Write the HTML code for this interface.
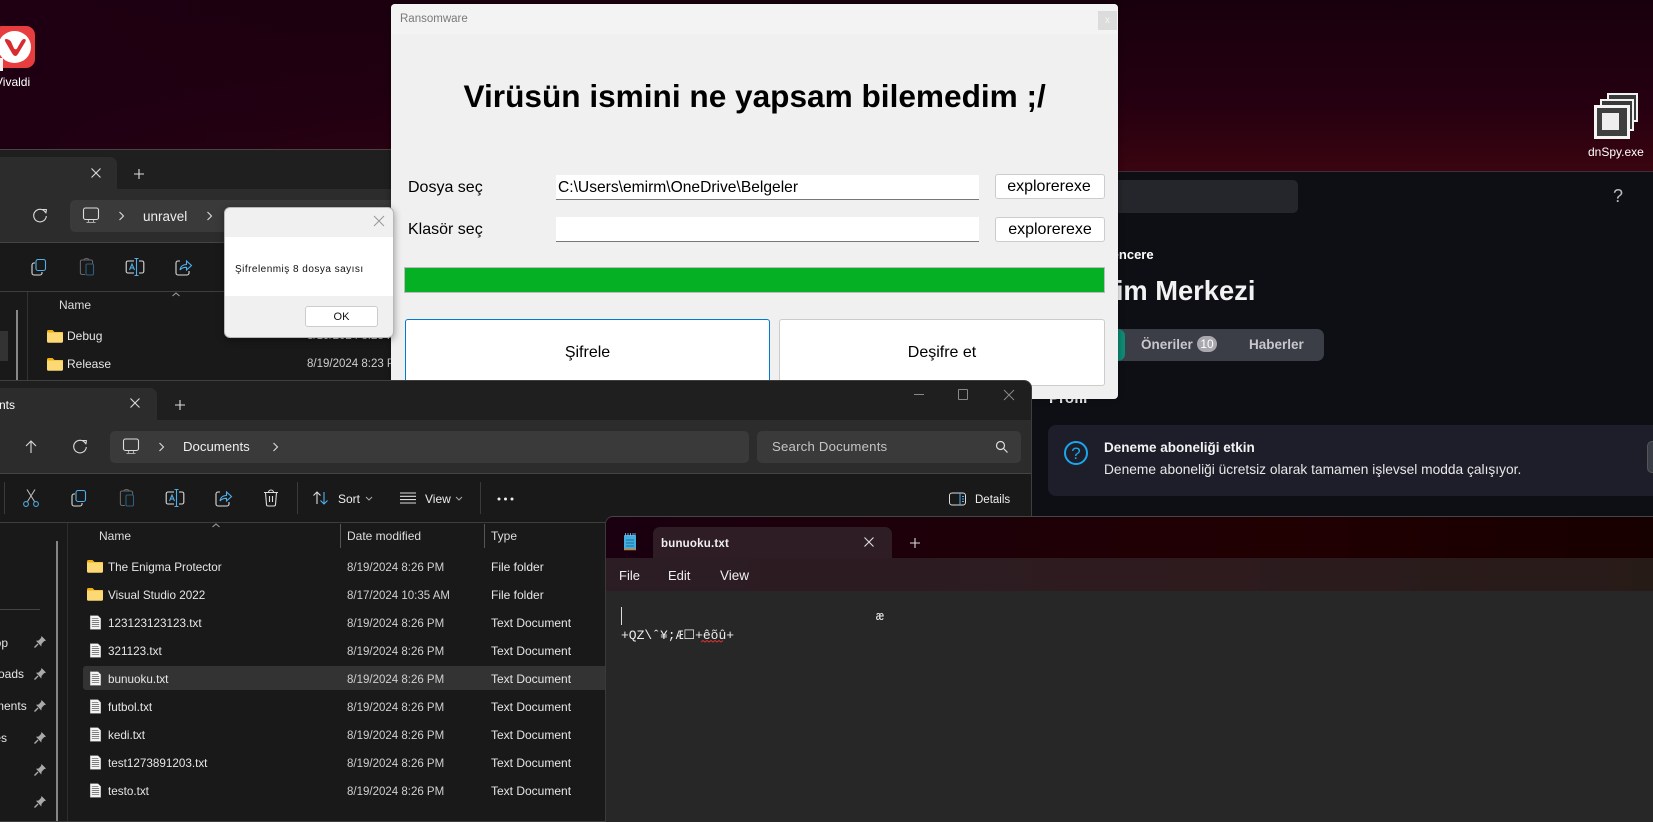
<!DOCTYPE html>
<html><head><meta charset="utf-8"><title>Ransomware</title>
<style>
html,body{margin:0;padding:0;background:#1c0012}
body{width:1653px;height:822px;overflow:hidden;position:relative;font-family:"Liberation Sans",sans-serif}
div,span,svg{position:absolute}
.t{white-space:nowrap;line-height:20px;height:20px}
.e{color:#e6e6e6;font-size:12px}
.g{color:#d0d0d0;font-size:11.5px}
.r{left:0;width:100%;height:28px}
svg.i{width:20px;height:20px;fill:none;stroke:#ddd;stroke-width:1.1}
</style></head><body>
<svg width="0" height="0" style="left:0;top:0">
<defs>
<symbol id="cut" viewBox="0 0 20 20"><path d="M6.5 13.5L14 1.5M13.5 13.5L6 1.5" stroke="#bbb" fill="none"/><circle cx="5" cy="16" r="2.4" stroke="#4aa8e0" fill="none"/><circle cx="15" cy="16" r="2.4" stroke="#4aa8e0" fill="none"/></symbol>
<symbol id="copy" viewBox="0 0 20 20"><path d="M6 6H5a2 2 0 0 0-2 2v8a2 2 0 0 0 2 2h6a2 2 0 0 0 2-2v-1" stroke="#ddd" fill="none"/><rect x="7" y="2.5" width="9.5" height="11" rx="2" stroke="#4fb0ec" fill="none"/></symbol>
<symbol id="paste" viewBox="0 0 20 20"><path d="M8 17.5H5a1.6 1.6 0 0 1-1.6-1.6V4.5A1.6 1.6 0 0 1 5 3h9a1.6 1.6 0 0 1 1.6 1.6V7M7 3a2.5 1.5 0 0 1 5 0" stroke="#666" fill="none"/><rect x="9" y="7" width="7.5" height="11" rx="1.2" stroke="#2c5f80" fill="none"/></symbol>
<symbol id="ren" viewBox="0 0 20 20"><path d="M9 4H3a1.8 1.8 0 0 0-1.8 1.8v8.4A1.8 1.8 0 0 0 3 16h6M14 4h3a1.8 1.8 0 0 1 1.8 1.8v8.4A1.8 1.8 0 0 1 17 16h-3" stroke="#ddd" fill="none"/><path d="M11.5 2v16M9.5 1.5h4M9.5 18.5h4M4.5 13L7 7l2.5 6M5.4 11h3.2" stroke="#4fb0ec" fill="none"/></symbol>
<symbol id="share" viewBox="0 0 20 20"><path d="M7 4H5a2 2 0 0 0-2 2v10a2 2 0 0 0 2 2h9a2 2 0 0 0 2-2v-2" stroke="#ddd" fill="none"/><path d="M7 13c.5-3.500 3-5.500 6.500-5.500V4L18.500 8.500 13.500 13V10.300C10.500 10.300 8.500 11 7 13z" stroke="#4fb0ec" fill="none"/></symbol>
<symbol id="del" viewBox="0 0 20 20"><path d="M3 4.500h14M4.500 4.500l1 12a1.500 1.500 0 0 0 1.500 1.500h6a1.500 1.500 0 0 0 1.500-1.500l1-12M7.500 4.500a2.500 2.500 0 0 1 5 0M8.500 8v6M11.500 8v6" stroke="#ddd" fill="none"/></symbol>
<symbol id="pc" viewBox="0 0 20 20"><rect x="2.500" y="2" width="15" height="11.500" rx="2" stroke="#ddd" fill="none"/><path d="M5.500 16.500h9M7.500 14v2.500M12.500 14v2.500" stroke="#aaa" fill="none"/></symbol>
<symbol id="ref" viewBox="0 0 20 20"><path d="M15.500 6.500A6.300 6.300 0 1 0 16.300 10M12.500 3.500h4v-.1l-.7 4" stroke="#ddd" fill="none"/></symbol>
<symbol id="doc" viewBox="0 0 16 18"><path d="M1.500.5h9.500l3.500 3.500v13.500H1.500z" fill="#f4f4f4" stroke="#999" stroke-width=".6"/><path d="M3.500 4h8M3.500 6.500h9M3.500 9h9M3.500 11.500h9M3.500 14h9" stroke="#555" stroke-width=".9"/></symbol>
<symbol id="fold" viewBox="0 0 16 14"><path d="M0 2.500a1.500 1.500 0 0 1 1.500-1.500h4l2 2H16v2H0z" fill="#eeb10f"/><path d="M0 3.500h14.500a1.500 1.500 0 0 1 1.500 1.500v7.500a1.200 1.200 0 0 1-1.200 1.200H1.200A1.200 1.200 0 0 1 0 12.500z" fill="#fdd975"/></symbol>
<symbol id="pin" viewBox="0 0 14 14"><path d="M8.500 1l4.500 4.500-2 .8-2.400 2.600-.3 2.600L3 5.800l2.600-.3L8 3z" fill="#aaa"/><path d="M5 9l-3.500 3.500" stroke="#aaa" stroke-width="1.400"/></symbol>
</defs></svg>

<!-- desktop -->
<div style="left:0;top:0;width:1653px;height:172px;background:linear-gradient(90deg,rgba(30,0,18,1) 0%,rgba(30,0,18,0) 50%),linear-gradient(180deg,#18000c 0%,#250010 60%,#3a0410 100%)"></div>
<div style="left:-7px;top:26px;width:42px;height:42px;border-radius:9px;background:#e83d3f"></div>
<div style="left:-2px;top:31px;width:33px;height:32px;border-radius:50%;background:#fff"></div>
<svg width="30" height="24" style="left:1px;top:36px"><path d="M5 3q-2 0-.5 3l7 12q3 4 5.500 0l7.500-12.500q1-2.500-1.500-2.500-1.500 0-3 2.500l-4 7q-1 1.500-3 0l-3-7Q7.500 3 5 3z" fill="#d72d30"/></svg>
<div style="left:0;top:58px;width:3px;height:13px;background:#f2f2f2"></div>
<div class="t" style="left:-5px;top:72px;color:#fff;font-size:12px">Vivaldi</div>

<div style="left:1607px;top:93px;width:31px;height:29px;background:#3a3a3a;border:2px solid #f2f2f2;box-sizing:border-box"></div>
<div style="left:1600px;top:99px;width:34px;height:32px;background:#3a3a3a;border:2px solid #f2f2f2;box-sizing:border-box"></div>
<div style="left:1594px;top:105px;width:36px;height:34px;background:#3f3f3f;border:3px solid #f5f5f5;box-sizing:border-box"></div>
<div style="left:1602px;top:113px;width:17px;height:17px;background:#eee"></div>
<div class="t" style="left:1588px;top:142px;color:#fff;font-size:12px">dnSpy.exe</div>

<!-- dark app behind -->
<div style="left:980px;top:171px;width:673px;height:345px;background:#0d0f15;border-top:1px solid #3b3236;box-sizing:border-box">
 <div style="left:0;top:8px;width:318px;height:33px;background:#24262b;border-radius:5px"></div>
 <div class="t" style="left:633px;top:14px;color:#bbb;font-size:18px">?</div>
 <div class="t" style="left:123px;top:73px;color:#fff;font-size:13px;font-weight:bold">Pencere</div>
 <div class="t" style="left:60px;top:104px;height:30px;line-height:30px;color:#f2f2f2;font-size:27.3px;font-weight:bold">Yönetim Merkezi</div>
 <div style="left:60px;top:157px;width:284px;height:32px;background:#3b3d47;border-radius:7px"></div>
 <div style="left:60px;top:157px;width:85px;height:32px;background:#0e8a74;border-radius:7px"></div>
 <div class="t" style="left:161px;top:163px;color:#c8c8cc;font-size:13.5px;font-weight:bold">Öneriler</div>
 <div style="left:217px;top:164px;width:20px;height:16px;border-radius:8px;background:#a8a8ae;color:#fff;font-size:12px;line-height:16px;text-align:center">10</div>
 <div class="t" style="left:269px;top:163px;color:#c8c8cc;font-size:13.5px;font-weight:bold">Haberler</div>
 <div class="t" style="left:69px;top:217px;color:#f0f0f0;font-size:15px;font-weight:bold">Profil</div>
 <div style="left:68px;top:253px;width:640px;height:71px;background:#1e1e2a;border-radius:8px"></div>
 <svg width="26" height="26" style="left:83px;top:268px"><circle cx="13" cy="13" r="11" fill="none" stroke="#1aa7ee" stroke-width="2"/><text x="13" y="19" font-size="17" fill="#1aa7ee" text-anchor="middle" font-family="Liberation Sans">?</text></svg>
 <div class="t" style="left:124px;top:266px;color:#f2f2f2;font-size:13.5px;font-weight:bold">Deneme aboneliği etkin</div>
 <div class="t" style="left:124px;top:288px;color:#e8e8e8;font-size:13.75px">Deneme aboneliği ücretsiz olarak tamamen işlevsel modda çalışıyor.</div>
 <div style="left:667px;top:269px;width:20px;height:32px;background:#3a3d46;border-radius:5px;border:1px solid #555;box-sizing:border-box"></div>
</div>

<!-- back explorer -->
<div style="left:0;top:149px;width:400px;height:232px;background:#1f1f1f;border-top:1px solid #4a4344;box-sizing:border-box;overflow:hidden">
 <div style="left:0;top:7px;width:117px;height:33px;background:#2c2c2c;border-radius:0 7px 0 0"></div>
 <svg class="i" style="left:86px;top:13px"><path d="M5.500 5.500l9 9M14.500 5.500l-9 9"/></svg>
 <svg class="i" style="left:129px;top:14px"><path d="M10 5v10M5 10h10"/></svg>
 <div style="left:0;top:39px;width:400px;height:54px;background:#2c2c2c;border-bottom:1px solid #444;box-sizing:border-box"></div>
 <div style="left:70px;top:50px;width:330px;height:32px;background:#3a3a3a;border-radius:5px"></div>
 <svg class="i" style="left:30px;top:56px"><use href="#ref"/></svg>
 <svg class="i" style="left:81px;top:56px"><use href="#pc"/></svg>
 <svg class="i" style="left:111px;top:56px"><path d="M8.500 6l4 4-4 4"/></svg>
 <div class="t" style="left:143px;top:57px;color:#eee;font-size:13.5px">unravel</div>
 <svg class="i" style="left:199px;top:56px"><path d="M8.500 6l4 4-4 4"/></svg>
 <div style="left:0;top:93px;width:400px;height:49px;background:#191919;border-bottom:1px solid #3d3d3d;box-sizing:border-box"></div>
 <svg class="i" style="left:29px;top:107px"><use href="#copy"/></svg>
 <svg class="i" style="left:77px;top:107px"><use href="#paste"/></svg>
 <svg class="i" style="left:125px;top:107px"><use href="#ren"/></svg>
 <svg class="i" style="left:173px;top:107px"><use href="#share"/></svg>
 <div style="left:0;top:142px;width:400px;height:90px;background:#191919"></div>
 <div style="left:27px;top:142px;width:1px;height:90px;background:#333"></div>
 <div style="left:16px;top:160px;width:2px;height:72px;background:#888"></div>
 <div style="left:0;top:181px;width:8px;height:30px;background:#333"></div>
 <svg class="i" style="left:166px;top:135px;stroke:#999"><path d="M6.500 11l3.500-3 3.500 3"/></svg>
 <div class="t e" style="left:59px;top:145px;color:#ddd">Name</div>
 <svg width="16" height="14" style="left:47px;top:179px"><use href="#fold"/></svg>
 <div class="t e" style="left:67px;top:176px">Debug</div>
 <svg width="16" height="14" style="left:47px;top:207px"><use href="#fold"/></svg>
 <div class="t e" style="left:67px;top:204px">Release</div>
 <div class="t g" style="left:307px;top:176px">8/19/2024 8:23 PM</div>
 <div class="t g" style="left:307px;top:204px">8/19/2024 8:23 PM</div>
</div>

<!-- ransomware window -->
<div style="left:391px;top:4px;width:727px;height:395px;background:#f0f0f0;border-radius:4px;box-shadow:0 0 6px rgba(0,0,0,.4)">
 <div style="left:0;top:0;width:727px;height:30px;background:#f3f3f3;border-radius:4px 4px 0 0"></div>
 <div class="t" style="left:9px;top:5px;color:#7a7a7a;font-size:11.5px">Ransomware</div>
 <div style="left:707px;top:7px;width:19px;height:19px;background:#dcdcdc;color:#f4f4f4;font-size:10px;line-height:19px;text-align:center">x</div>
 <div class="t" style="left:72.5px;top:72px;height:40px;line-height:40px;color:#000;font-size:31.6px;font-weight:bold">Virüsün ismini ne yapsam bilemedim ;/</div>
 <div class="t" style="left:17px;top:174px;color:#000;font-size:16px">Dosya seç</div>
 <div style="left:165px;top:171px;width:423px;height:25px;background:#fff;border-bottom:1px solid #777;box-sizing:border-box"></div>
 <div class="t" style="left:167px;top:174px;color:#000;font-size:15.6px">C:\Users\emirm\OneDrive\Belgeler</div>
 <div style="left:604px;top:170px;width:110px;height:25px;background:#fff;border:1px solid #ccc;border-radius:3px;box-sizing:border-box;color:#000;font-size:16px;line-height:24px;text-align:center"><span style="position:static;margin-left:-2px">explorerexe</span></div>
 <div class="t" style="left:17px;top:216px;color:#000;font-size:16px">Klasör seç</div>
 <div style="left:165px;top:213px;width:423px;height:25px;background:#fff;border-bottom:1px solid #777;box-sizing:border-box"></div>
 <div style="left:604px;top:213px;width:110px;height:25px;background:#fff;border:1px solid #ccc;border-radius:3px;box-sizing:border-box;color:#000;font-size:16px;line-height:24px;text-align:center">explorerexe</div>
 <div style="left:13px;top:263px;width:701px;height:26px;background:#06b025;border:1px solid #bcbcbc;box-sizing:border-box"></div>
 <div style="left:14px;top:315px;width:365px;height:70px;background:#fff;border:1px solid #0078d4;border-radius:3px;box-sizing:border-box;color:#000;font-size:16px;line-height:65px;text-align:center">Şifrele</div>
 <div style="left:388px;top:315px;width:326px;height:67px;background:#fff;border:1px solid #ccc;border-radius:3px;box-sizing:border-box;color:#000;font-size:16px;line-height:65px;text-align:center">Deşifre et</div>
</div>

<!-- dialog -->
<div style="left:224px;top:207px;width:170px;height:131px;background:#f0f0f0;border-radius:6px;border:1px solid #b8b8b8;box-sizing:border-box;box-shadow:0 2px 8px rgba(0,0,0,.4)">
 <div style="left:0;top:29px;width:168px;height:59px;background:#fff"></div>
 <svg width="14" height="14" style="left:147px;top:6px"><path d="M2 2l10 10M12 2L2 12" stroke="#999" fill="none"/></svg>
 <div class="t" style="left:10px;top:52px;color:#111;font-size:10px;letter-spacing:.48px">Şifrelenmiş 8 dosya sayısı</div>
 <div style="left:80px;top:98px;width:73px;height:21px;background:#fff;border:1px solid #ccc;border-radius:3px;box-sizing:border-box;color:#111;font-size:11px;line-height:21px;text-align:center">OK</div>
</div>

<!-- front explorer -->
<div style="left:-11px;top:380px;width:1043px;height:442px;background:#1f1f1f;border:1px solid #3e3e3e;border-radius:8px 8px 0 0;box-sizing:border-box;overflow:hidden">
 <div style="left:0;top:7px;width:167px;height:33px;background:#2c2c2c;border-radius:0 7px 0 0"></div>
 <div class="t e" style="left:-45px;top:14px;width:70px;text-align:right;color:#fff">Documents</div>
 <svg class="i" style="left:135px;top:12px"><path d="M5.500 5.500l9 9M14.500 5.500l-9 9"/></svg>
 <svg class="i" style="left:180px;top:14px"><path d="M10 5v10M5 10h10"/></svg>
 <div style="left:924px;top:13px;width:10px;height:1px;background:#888"></div>
 <div style="left:968px;top:8px;width:8px;height:9px;border:1px solid #888;border-radius:1px"></div>
 <svg width="12" height="12" style="left:1013px;top:8px"><path d="M1 1l10 10M11 1L1 11" stroke="#888" fill="none"/></svg>
 <div style="left:0;top:39px;width:1043px;height:54px;background:#2c2c2c;border-bottom:1px solid #444;box-sizing:border-box"></div>
 <div style="left:120px;top:50px;width:639px;height:32px;background:#3a3a3a;border-radius:5px"></div>
 <svg class="i" style="left:31px;top:56px"><path d="M10 16V4M5 9l5-5 5 5"/></svg>
 <svg class="i" style="left:80px;top:56px"><use href="#ref"/></svg>
 <svg class="i" style="left:131px;top:56px"><use href="#pc"/></svg>
 <svg class="i" style="left:161px;top:56px"><path d="M8.500 6l4 4-4 4"/></svg>
 <div class="t" style="left:193px;top:56px;color:#eee;font-size:13.2px">Documents</div>
 <svg class="i" style="left:275px;top:56px"><path d="M8.500 6l4 4-4 4"/></svg>
 <div style="left:767px;top:50px;width:264px;height:32px;background:#3a3a3a;border-radius:5px"></div>
 <div class="t" style="left:782px;top:56px;color:#c4c4c4;font-size:13.2px;letter-spacing:.2px">Search Documents</div>
 <svg width="14" height="14" style="left:1005px;top:59px"><circle cx="5.500" cy="5.500" r="4" fill="none" stroke="#ddd" stroke-width="1.200"/><path d="M8.500 8.500l4 4" stroke="#ddd" stroke-width="1.200"/></svg>
 <div style="left:0;top:93px;width:1043px;height:49px;background:#191919;border-bottom:1px solid #3d3d3d;box-sizing:border-box"></div>
 <div style="left:14px;top:101px;width:1px;height:32px;background:#3a3a3a"></div>
 <svg class="i" style="left:31px;top:107px"><use href="#cut"/></svg>
 <svg class="i" style="left:79px;top:107px"><use href="#copy"/></svg>
 <svg class="i" style="left:127px;top:107px"><use href="#paste"/></svg>
 <svg class="i" style="left:175px;top:107px"><use href="#ren"/></svg>
 <svg class="i" style="left:223px;top:107px"><use href="#share"/></svg>
 <svg class="i" style="left:271px;top:107px"><use href="#del"/></svg>
 <div style="left:307px;top:101px;width:1px;height:32px;background:#3a3a3a"></div>
 <svg class="i" style="left:321px;top:107px"><path d="M6 16V4M2.500 7.500L6 4l3.500 3.500" stroke="#ddd"/><path d="M13 4v12M9.500 12.500L13 16l3.500-3.500" stroke="#4fb0ec"/></svg>
 <div class="t e" style="left:348px;top:108px;color:#eee">Sort</div>
 <svg width="8" height="6" style="left:375px;top:115px"><path d="M1 1l3 3 3-3" stroke="#aaa" fill="none"/></svg>
 <svg class="i" style="left:408px;top:107px"><path d="M2 5h16M2 8.300h16M2 11.600h16M2 15h16"/></svg>
 <div class="t e" style="left:435px;top:108px;color:#eee">View</div>
 <svg width="8" height="6" style="left:465px;top:115px"><path d="M1 1l3 3 3-3" stroke="#aaa" fill="none"/></svg>
 <div style="left:490px;top:101px;width:1px;height:32px;background:#3a3a3a"></div>
 <svg width="18" height="6" style="left:507px;top:115px"><circle cx="2" cy="3" r="1.500" fill="#eee"/><circle cx="8.500" cy="3" r="1.500" fill="#eee"/><circle cx="15" cy="3" r="1.500" fill="#eee"/></svg>
 <svg width="18" height="14" style="left:959px;top:111px"><rect x=".5" y="1" width="16" height="12" rx="2.500" fill="none" stroke="#ddd"/><path d="M11 1v12M13 4.500h2M13 7h2M13 9.500h2" stroke="#4fb0ec" fill="none"/></svg>
 <div class="t" style="left:985px;top:109px;color:#eee;font-size:11.5px">Details</div>
 <div style="left:0;top:142px;width:1043px;height:300px;background:#191919"></div>
 <div style="left:77px;top:142px;width:1px;height:300px;background:#2d2d2d"></div>
 <div style="left:66px;top:160px;width:2px;height:282px;background:#858585"></div>
 <div style="left:0;top:228px;width:50px;height:1px;background:#444"></div>
 <div class="t e" style="left:-42px;top:252px;width:60px;text-align:right">Desktop</div>
 <div class="t e" style="left:-26px;top:283px;width:60px;text-align:right">Downloads</div>
 <div class="t e" style="left:-24px;top:315px;width:60px;text-align:right">Documents</div>
 <div class="t e" style="left:-43px;top:347px;width:60px;text-align:right">Pictures</div>
 <svg width="14" height="14" style="left:43px;top:254px"><use href="#pin"/></svg>
 <svg width="14" height="14" style="left:43px;top:286px"><use href="#pin"/></svg>
 <svg width="14" height="14" style="left:43px;top:318px"><use href="#pin"/></svg>
 <svg width="14" height="14" style="left:43px;top:350px"><use href="#pin"/></svg>
 <svg width="14" height="14" style="left:43px;top:382px"><use href="#pin"/></svg>
 <svg width="14" height="14" style="left:43px;top:414px"><use href="#pin"/></svg>
 <svg class="i" style="left:216px;top:135px;stroke:#999"><path d="M6.500 11l3.500-3 3.500 3"/></svg>
 <div class="t e" style="left:109px;top:145px;color:#ddd">Name</div>
 <div style="left:350px;top:143px;width:1px;height:24px;background:#555"></div>
 <div class="t e" style="left:357px;top:145px;color:#ddd">Date modified</div>
 <div style="left:494px;top:143px;width:1px;height:24px;background:#555"></div>
 <div class="t e" style="left:501px;top:145px;color:#ddd">Type</div>
 <div style="left:93px;top:285px;width:540px;height:24px;background:#333;border-radius:3px"></div>

 <svg width="16" height="14" style="left:97px;top:178px"><use href="#fold"/></svg>
 <div class="t e" style="left:118px;top:177px;font-size:11.7px">The Enigma Protector</div><div class="t g" style="left:357px;top:177px">8/19/2024 8:26 PM</div><div class="t e" style="left:501px;top:176px">File folder</div>
 <svg width="16" height="14" style="left:97px;top:206px"><use href="#fold"/></svg>
 <div class="t e" style="left:118px;top:205px;font-size:11.7px">Visual Studio 2022</div><div class="t g" style="left:357px;top:205px">8/17/2024 10:35 AM</div><div class="t e" style="left:501px;top:204px">File folder</div>
 <svg width="13" height="17" style="left:99px;top:233px"><use href="#doc"/></svg>
 <div class="t e" style="left:118px;top:233px;font-size:11.7px">123123123123.txt</div><div class="t g" style="left:357px;top:233px">8/19/2024 8:26 PM</div><div class="t e" style="left:501px;top:232px">Text Document</div>
 <svg width="13" height="17" style="left:99px;top:261px"><use href="#doc"/></svg>
 <div class="t e" style="left:118px;top:261px;font-size:11.7px">321123.txt</div><div class="t g" style="left:357px;top:261px">8/19/2024 8:26 PM</div><div class="t e" style="left:501px;top:260px">Text Document</div>
 <svg width="13" height="17" style="left:99px;top:289px"><use href="#doc"/></svg>
 <div class="t e" style="left:118px;top:289px;font-size:11.7px">bunuoku.txt</div><div class="t g" style="left:357px;top:289px">8/19/2024 8:26 PM</div><div class="t e" style="left:501px;top:288px">Text Document</div>
 <svg width="13" height="17" style="left:99px;top:317px"><use href="#doc"/></svg>
 <div class="t e" style="left:118px;top:317px;font-size:11.7px">futbol.txt</div><div class="t g" style="left:357px;top:317px">8/19/2024 8:26 PM</div><div class="t e" style="left:501px;top:316px">Text Document</div>
 <svg width="13" height="17" style="left:99px;top:345px"><use href="#doc"/></svg>
 <div class="t e" style="left:118px;top:345px;font-size:11.7px">kedi.txt</div><div class="t g" style="left:357px;top:345px">8/19/2024 8:26 PM</div><div class="t e" style="left:501px;top:344px">Text Document</div>
 <svg width="13" height="17" style="left:99px;top:373px"><use href="#doc"/></svg>
 <div class="t e" style="left:118px;top:373px;font-size:11.7px">test1273891203.txt</div><div class="t g" style="left:357px;top:373px">8/19/2024 8:26 PM</div><div class="t e" style="left:501px;top:372px">Text Document</div>
 <svg width="13" height="17" style="left:99px;top:401px"><use href="#doc"/></svg>
 <div class="t e" style="left:118px;top:401px;font-size:11.7px">testo.txt</div><div class="t g" style="left:357px;top:401px">8/19/2024 8:26 PM</div><div class="t e" style="left:501px;top:400px">Text Document</div>
</div>

<!-- notepad -->
<div style="left:605px;top:516px;width:1048px;height:306px;background:#272727;border-radius:8px 0 0 0;border-top:1px solid #454545;border-left:1px solid #3a3a3a;box-sizing:border-box;overflow:hidden">
 <div style="left:0;top:0;width:1048px;height:41px;background:linear-gradient(90deg,#1a0010 0%,#1f0006 45%,#210002 65%,#170000 100%)"></div>
 <div style="left:0;top:41px;width:1048px;height:33px;background:linear-gradient(90deg,#2c1c24 0%,#2d1b1e 60%,#271b18 100%)"></div>
 <div style="left:47px;top:10px;width:239px;height:31px;background:#2e1d25;border-radius:7px 7px 0 0"></div>
 <svg width="14" height="18" style="left:17px;top:16px"><rect x="1" y="2" width="12" height="15" rx="1" fill="#42aee0"/><path d="M1 16.500h12" stroke="#d08030" stroke-width="1.500"/><path d="M3 7h8M3 10h8M3 13h8" stroke="#1e6f9c" stroke-width="1"/><path d="M2.500 0v3M5 0v3M7.500 0v3M10 0v3M12 0v3" stroke="#7ccbea" stroke-width=".8"/></svg>
 <div class="t" style="left:55px;top:17px;color:#f0f0f0;font-size:11.5px;font-weight:bold;letter-spacing:.2px">bunuoku.txt</div>
 <svg class="i" style="left:253px;top:15px"><path d="M5.500 5.500l9 9M14.500 5.500l-9 9"/></svg>
 <svg class="i" style="left:299px;top:16px"><path d="M10 5v10M5 10h10"/></svg>
 <div class="t" style="left:13px;top:49px;color:#f0f0f0;font-size:13px">File</div>
 <div class="t" style="left:62px;top:49px;color:#f0f0f0;font-size:13px">Edit</div>
 <div class="t" style="left:114px;top:49px;color:#f0f0f0;font-size:13.5px">View</div>
 <div style="left:15px;top:90px;width:1px;height:18px;background:#ddd"></div>
 <div class="t" style="left:270px;top:90px;color:#eee;font-size:13px;font-family:'Liberation Mono',monospace">æ</div>
 <div class="t" style="left:15px;top:109px;color:#eee;font-size:13px;font-family:'Liberation Mono',monospace">+QZ\ˆ¥;Æ☐+êõû+</div>
 <svg width="24" height="3" style="left:95px;top:123px"><path d="M0 2l2-1.500 2 1.500 2-1.500 2 1.500 2-1.500 2 1.500 2-1.500 2 1.500 2-1.500 2 1.500 2-1.500" stroke="#e03030" fill="none"/></svg>
</div>
</body></html>
